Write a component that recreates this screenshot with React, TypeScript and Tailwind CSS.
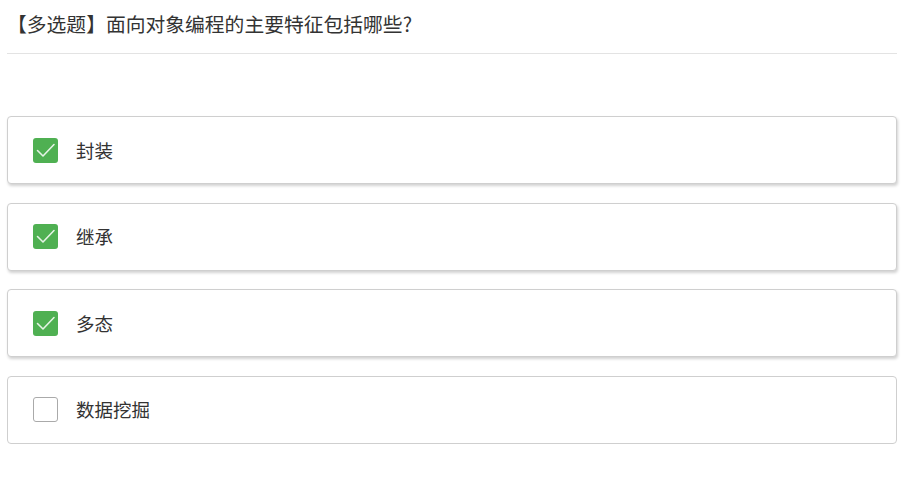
const options = [
  { label: '封装', checked: true },
  { label: '继承', checked: true },
  { label: '多态', checked: true },
  { label: '数据挖掘', checked: false },
];

function CheckBox({ checked }: { checked: boolean }) {
  if (!checked) {
    return <span className="w-[25px] h-[25px] rounded-[3px] border border-[#aaaaaa] bg-white shrink-0" />;
  }
  return (
    <span className="w-[25px] h-[25px] rounded-[3px] bg-[#4fb052] shrink-0 flex items-center justify-center">
      <svg width="25" height="25" viewBox="0 0 25 25" fill="none">
        <path d="M4.5 12.5 L10 18 L21 6.5" stroke="rgba(255,255,255,0.85)" strokeWidth="1.6" strokeLinecap="round" strokeLinejoin="round" />
      </svg>
    </span>
  );
}

export default function App() {
  return (
    <div
      className="min-h-screen bg-white pl-[7px] pr-[15px] text-[#333333]"
      style={{ fontFamily: '"Microsoft YaHei", "Noto Sans CJK SC", sans-serif' }}
    >
      <div className="h-[54px] flex items-center border-b border-[#e3e3e3] text-[19.8px] leading-none pb-[5px]">
        【多选题】面向对象编程的主要特征包括哪些?
      </div>

      <div className="mt-[62px] flex flex-col gap-[18.5px]">
        {options.map((o) => (
          <div
            key={o.label}
            className={`h-[68px] flex items-center gap-[18px] pl-[25px] rounded-[4px] border border-[#cfcfcf] bg-white ${
              o.checked ? 'shadow-[1px_2px_3px_rgba(0,0,0,0.18)]' : ''
            }`}
          >
            <CheckBox checked={o.checked} />
            <span className="text-[18.5px] leading-none">{o.label}</span>
          </div>
        ))}
      </div>
    </div>
  );
}
